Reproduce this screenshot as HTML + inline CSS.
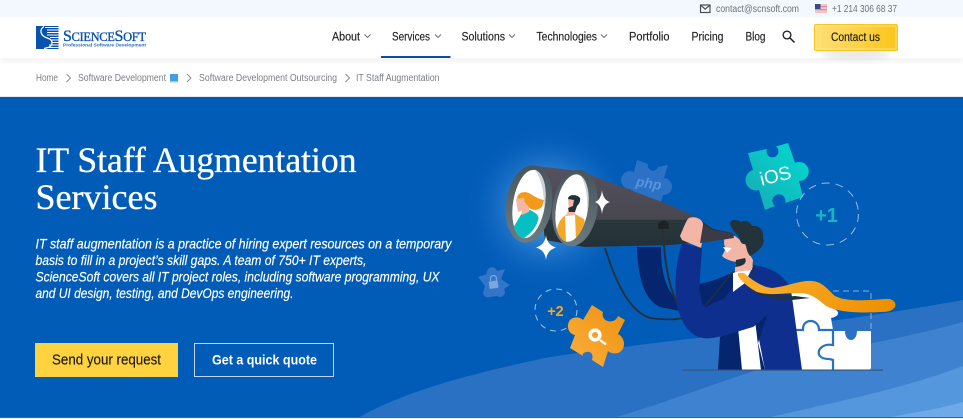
<!DOCTYPE html>
<html lang="en"><head><meta charset="utf-8"><title>IT Staff Augmentation Services</title>
<style>
html,body{margin:0;padding:0;background:#fff;width:963px;height:419px;overflow:hidden}
svg{display:block}
text{font-family:"Liberation Sans",Arial,sans-serif}
.n{font-size:11.5px;fill:#222;stroke:#222;stroke-width:.15px}
.b{font-size:10px;fill:#7b7f85}
.t{font-size:10px;fill:#6d7278}
.p{font-size:14px;font-style:italic;fill:#fff;stroke:#fff;stroke-width:.18px}
.h{font-family:"Liberation Serif",serif;font-size:36px;fill:#fff;stroke:#fff;stroke-width:.3px}
</style></head><body>
<svg width="963" height="419" viewBox="0 0 963 419" xmlns="http://www.w3.org/2000/svg">
<defs>
<linearGradient id="cb" x1="0" x2="1"><stop offset="0" stop-color="#ffdf75"/><stop offset="1" stop-color="#fac61c"/></linearGradient>
<linearGradient id="teal" x1="0" y1="1" x2="1" y2="0"><stop offset="0" stop-color="#17a9b4"/><stop offset="1" stop-color="#02dcd2"/></linearGradient>
<linearGradient id="or" x1="0" y1="1" x2="1" y2="0"><stop offset="0" stop-color="#fbb03f"/><stop offset="1" stop-color="#ed910f"/></linearGradient>
<linearGradient id="tie" x1="0" x2="1"><stop offset="0" stop-color="#fcb031"/><stop offset="1" stop-color="#ec8f00"/></linearGradient>
<linearGradient id="bino" x1="0" y1="0" x2="0" y2="1"><stop offset="0" stop-color="#55525f"/><stop offset=".66" stop-color="#48464f"/><stop offset=".67" stop-color="#2a383d"/><stop offset="1" stop-color="#233035"/></linearGradient>
<linearGradient id="rim" x1="0" y1="0" x2="0" y2="1"><stop offset="0" stop-color="#47555c"/><stop offset="1" stop-color="#6b7b80"/></linearGradient>
<radialGradient id="glow"><stop offset="0" stop-color="#9fd0ff" stop-opacity=".75"/><stop offset=".55" stop-color="#4f9be6" stop-opacity=".35"/><stop offset="1" stop-color="#0b5fb9" stop-opacity="0"/></radialGradient>
<filter id="sh" x="-30%" y="-30%" width="160%" height="200%"><feGaussianBlur stdDeviation="3"/></filter>
<clipPath id="l1"><ellipse cx="529" cy="204" rx="16" ry="34.500" transform="rotate(9 529 204)"/></clipPath>
<clipPath id="l2"><ellipse cx="572" cy="208" rx="16" ry="34" transform="rotate(9 572 208)"/></clipPath>
<clipPath id="hero"><rect x="0" y="97" width="963" height="320"/></clipPath>
</defs>

<!-- top bar -->
<rect width="963" height="17" fill="#f3f8fe"/>
<rect x="700.500" y="5" width="9.500" height="7.500" fill="none" stroke="#4a4f55" stroke-width="1.200"/>
<path d="M701 5.500l4.200 3.600 4.300-3.600" fill="none" stroke="#4a4f55" stroke-width="1.200"/>
<text class="t" x="716" y="12" textLength="83" lengthAdjust="spacingAndGlyphs">contact@scnsoft.com</text>
<rect x="815" y="4" width="12" height="9" fill="#f0c5c8"/>
<rect x="815" y="6" width="12" height="1.200" fill="#d98c96"/><rect x="815" y="9" width="12" height="1.200" fill="#d98c96"/>
<rect x="815" y="4" width="5.500" height="5" fill="#3b4a86"/>
<text class="t" x="832" y="12" textLength="65" lengthAdjust="spacingAndGlyphs">+1 214 306 68 37</text>

<!-- header -->
<rect x="0" y="57" width="963" height="4" fill="#000" opacity=".07" filter="url(#sh)"/>
<rect x="0" y="17" width="963" height="41" fill="#fff"/>
<!-- logo -->
<rect x="36" y="26" width="22.500" height="23" fill="#0a53ad"/>
<path d="M45 27.500h13.500M47 30h11.500M47 32.500h11.500M47 35h11.500M50 37.500h8.500M52 40h6.500M52 42.500h6.500M49 45h9.500M46 47.500h12.500" stroke="#fff" stroke-width="1.100"/>
<path d="M44 26.500c-5 3-3 8 0 10s8 2 8 6-3 5-8 6" fill="none" stroke="#fff" stroke-width="1.300"/>
<text x="63" y="41" textLength="83" lengthAdjust="spacing" style="font-family:'Liberation Serif',serif;font-size:16px;fill:#0b52aa;stroke:#0b52aa;stroke-width:.35px"><tspan>S</tspan><tspan font-size="12.500">CIENCE</tspan><tspan>S</tspan><tspan font-size="12.500">OFT</tspan></text>
<text x="63" y="46.700" textLength="83" lengthAdjust="spacingAndGlyphs" style="font-size:4.600px;font-weight:700;fill:#2f6dbb">Professional Software Development</text>
<!-- nav -->
<text class="n" x="332" y="40.500" textLength="28" lengthAdjust="spacingAndGlyphs">About</text>
<path d="M364.500 34.500l3 3 3-3" fill="none" stroke="#666" stroke-width=".9"/>
<text class="n" x="392" y="40.500" textLength="38" lengthAdjust="spacingAndGlyphs">Services</text>
<path d="M435 34.500l3 3 3-3" fill="none" stroke="#666" stroke-width=".9"/>
<rect x="381" y="56" width="69.500" height="2" fill="#0b4ea8"/>
<text class="n" x="461.500" y="40.500" textLength="43.500" lengthAdjust="spacingAndGlyphs">Solutions</text>
<path d="M509 34.500l3 3 3-3" fill="none" stroke="#666" stroke-width=".9"/>
<text class="n" x="536.500" y="40.500" textLength="60.500" lengthAdjust="spacingAndGlyphs">Technologies</text>
<path d="M601 34.500l3 3 3-3" fill="none" stroke="#666" stroke-width=".9"/>
<text class="n" x="629" y="40.500" textLength="40.500" lengthAdjust="spacingAndGlyphs">Portfolio</text>
<text class="n" x="691.500" y="40.500" textLength="32" lengthAdjust="spacingAndGlyphs">Pricing</text>
<text class="n" x="745.500" y="40.500" textLength="20" lengthAdjust="spacingAndGlyphs">Blog</text>
<circle cx="787" cy="35" r="3.900" fill="none" stroke="#1b1b1b" stroke-width="1.300"/>
<path d="M790 38l4.500 4.500" stroke="#1b1b1b" stroke-width="1.500"/>
<ellipse cx="856" cy="55" rx="34" ry="4" fill="#aaa" opacity=".3" filter="url(#sh)"/>
<rect x="814.500" y="24.500" width="83" height="26" rx="1.500" fill="url(#cb)" stroke="#fbc51d"/>
<rect x="816" y="26" width="80" height="23" fill="none" stroke="#ffe999" stroke-width=".8"/>
<text x="831" y="41" textLength="49" lengthAdjust="spacingAndGlyphs" style="font-size:11.500px;fill:#1a1a1a;stroke:#1a1a1a;stroke-width:.15px">Contact us</text>

<!-- breadcrumb -->
<text class="b" x="36" y="81" textLength="22" lengthAdjust="spacingAndGlyphs">Home</text>
<path d="M66.500 74l4 4-4 4M187 74l4 4-4 4M345.500 74l4 4-4 4" fill="none" stroke="#888" stroke-width=".9"/>
<text class="b" x="78" y="81" textLength="88" lengthAdjust="spacingAndGlyphs">Software Development</text>
<rect x="170" y="74" width="8" height="7" fill="#3f9fe0"/><rect x="170" y="81" width="8" height="1.500" fill="#b9c6d2"/>
<text class="b" x="199" y="81" textLength="138" lengthAdjust="spacingAndGlyphs">Software Development Outsourcing</text>
<text class="b" x="356" y="81" textLength="83.500" lengthAdjust="spacingAndGlyphs">IT Staff Augmentation</text>

<!-- hero -->
<rect x="0" y="96.500" width="963" height="1" fill="#c4cfdf"/>
<rect x="0" y="97" width="963" height="320" fill="#015cb8"/>
<g clip-path="url(#hero)">
<path d="M355 420C400 392 470 374 545 358C640 342 800 330 963 300V420Z" fill="#2a71c4"/>
<path d="M606 420C660 405 710 385 760 369C810 352 880 345 963 322V420Z" fill="#3f83d0"/>
<path d="M758 420C830 403 900 390 963 366V420Z" fill="#5597dc"/>
<path d="M875 420C905 414 935 410 963 402V420Z" fill="#6eaae7"/>
</g>
<rect x="0" y="417" width="963" height="1" fill="#1a6cc2"/>
<rect x="0" y="418" width="963" height="1" fill="#eaf1f9"/>

<!-- hero text -->
<text class="h" x="35.500" y="172" textLength="321" lengthAdjust="spacingAndGlyphs">IT Staff Augmentation</text>
<text class="h" x="35.500" y="209" textLength="122" lengthAdjust="spacingAndGlyphs">Services</text>
<text class="p" x="35.500" y="248.500" textLength="416" lengthAdjust="spacingAndGlyphs">IT staff augmentation is a practice of hiring expert resources on a temporary</text>
<text class="p" x="35.500" y="265" textLength="331" lengthAdjust="spacingAndGlyphs">basis to fill in a project’s skill gaps. A team of 750+ IT experts,</text>
<text class="p" x="35.500" y="281.500" textLength="404" lengthAdjust="spacingAndGlyphs">ScienceSoft covers all IT project roles, including software programming, UX</text>
<text class="p" x="35.500" y="298" textLength="258" lengthAdjust="spacingAndGlyphs">and UI design, testing, and DevOps engineering.</text>
<rect x="35" y="343" width="143" height="34" fill="#ffd23f"/>
<text x="52" y="364.500" textLength="109" lengthAdjust="spacingAndGlyphs" style="font-size:14.500px;fill:#1a1a1a;stroke:#1a1a1a;stroke-width:.15px">Send your request</text>
<rect x="194.500" y="343.500" width="139" height="33" fill="none" stroke="#c3d5ee"/>
<text x="212" y="364.500" textLength="105" lengthAdjust="spacingAndGlyphs" style="font-size:14px;font-weight:700;fill:#fff">Get a quick quote</text>

<!-- illustration -->
<circle cx="548" cy="208" r="82" fill="url(#glow)"/>
<!-- php puzzle -->
<path d="M637 160L648 164A5 5 0 0 0 658 167L668 165L664 178A8.500 8.500 0 1 1 663 195L660 205L630 195L631 189A9 9 0 1 1 634 172Z" fill="#2b72c6"/>
<text x="648" y="188" transform="rotate(9 648 188)" text-anchor="middle" style="font-size:14px;font-style:italic;font-weight:700;fill:#5b95db">php</text>
<!-- lock puzzle -->
<path d="M478 277L487 274A5 5 0 1 1 497 271L505 269L501 279L510 285L504 289A5 5 0 0 1 497 296L490 297A5 5 0 0 1 483 293L485 286Z" fill="#3375c9"/>
<rect x="489" y="281" width="9" height="7.500" rx="1" fill="#7ba6de" transform="rotate(-8 493 284)"/>
<path d="M490.500 281v-2.500a3 3 0 0 1 6 0v2" fill="none" stroke="#7ba6de" stroke-width="1.300"/>
<!-- +2 -->
<circle cx="556" cy="310" r="21" fill="none" stroke="#a8c3e4" stroke-width="1" stroke-dasharray="6 5"/>
<text x="555.500" y="316" text-anchor="middle" style="font-size:14.500px;font-weight:700;fill:#f6a623">+2</text>
<!-- orange puzzle -->
<path d="M592 305L603 312C600 322 615 325 618 316L625 320L618 334C626 338 626 350 618 353C614 354 610 353 608 351L603 367L592 360C594 354 590 351 587 352C584 352 582 354 583 356L570 348L575 335C568 334 566 325 570 320C574 316 580 317 583 320Z" fill="url(#or)"/>
<circle cx="595" cy="335" r="4.800" fill="none" stroke="#fff" stroke-width="3.600"/>
<path d="M600 340l6 4.500" stroke="#fff" stroke-width="2.200"/>
<!-- straps back -->
<path d="M605 248C618 290 632 312 650 318C665 320 680 320 690 316" fill="none" stroke="#27303a" stroke-width="1.800"/>
<!-- back arm -->
<path d="M637 247L661 247C661 275 666 290 680 303L680 311L660 307C645 300 638 280 637 247Z" fill="#05266e"/>
<!-- binoculars -->
<path d="M536 166L580 171L670 205L690 214C700 218 708 226 713 229L733 233L733 238L700 242L670 245L585 247L545 240Z" fill="url(#bino)"/>
<ellipse cx="529" cy="204" rx="23" ry="39" transform="rotate(8 529 204)" fill="url(#rim)"/>
<ellipse cx="575" cy="208" rx="22.500" ry="38.500" transform="rotate(8 575 208)" fill="url(#rim)"/>
<ellipse cx="529" cy="204" rx="16" ry="34.500" transform="rotate(9 529 204)" fill="#fff"/>
<ellipse cx="572" cy="208" rx="16" ry="34" transform="rotate(9 572 208)" fill="#fff"/>
<g clip-path="url(#l1)">
<path d="M535 170C546 185 547 215 537 240L560 240L550 165Z" fill="#cfd3d6"/>
<path d="M513 228L522 213L530 210C536 213 540 216 538 220C537 226 530 236 520 240L505 245Z" fill="#05bfc3"/>
<path d="M521 204L529 203L529 212L522 215Z" fill="#f4b7a4"/>
<path d="M517 198C518 192 524 191 529 193C534 196 538 199 544 200L542 207C537 211 531 211 528 206C525 203 523 200 519 201Z" fill="#f39a1d"/>
<path d="M516 199L524 198L525 209L518 212L517 206Z" fill="#f4b7a4"/>
</g>
<g clip-path="url(#l2)">
<path d="M578 172C590 185 590 220 580 245L600 245L595 165Z" fill="#cfd3d6"/>
<path d="M557 230C558 222 562 217 566 215L575 214L584 219C586 224 583 233 577 244L560 242Z" fill="#f4a82a"/>
<path d="M565 216L575 214L576 241L566 243Z" fill="#fff"/>
<path d="M569 208L575 207L575 215L566 216Z" fill="#f4b7a4"/>
<path d="M568 199L576 199L576 208L569 211Z" fill="#f4b7a4"/>
<path d="M568 199C568 194 577 194 580 198C581 202 578 205 577 206L575 212L569 212L568 208L573 206L574 200Z" fill="#22303a"/>
</g>
<!-- sparkles -->
<path d="M602 190Q603 200 610 202Q603 204 602 214Q601 204 595 202Q601 200 602 190Z" fill="#fff"/>
<path d="M546 235Q547 245 556 247.500Q547 250 546 260Q545 250 536 247.500Q545 245 546 235Z" fill="#fff"/>
<!-- strap front -->
<path d="M663 226C664 260 668 285 678 305" fill="none" stroke="#27303a" stroke-width="2"/>
<path d="M658 223L664 220L669 223L669 229L658 229Z" fill="#1c2428"/>
<!-- hand -->
<path d="M680 236C682 232 686 220 689 218C694 216 702 218 703 224C704 232 702 242 701 248L682 240Z" fill="#f3b5a6"/>
<!-- white puzzle -->
<path d="M785 292L831 292L831 308C840 310 841 316 831 318L833 330L785 330Z" fill="#fff"/>
<path d="M785 330H833V370H785Z" fill="#fff"/>
<path d="M833 331H845C845 343 857 343 857 331H871V367Q871 370 868 370H833Z" fill="#fff"/>
<path d="M795 330H803C802 318 819 318 819 330H833V345C821 343 816 352 820 356C823 360 828 358 833 360V370" fill="none" stroke="#2a70c8" stroke-width="2.200"/>
<path d="M833 291H871V330" fill="none" stroke="#8fb0da" stroke-width="1" stroke-dasharray="6 4"/>
<!-- body -->
<path d="M698 284C712 282 726 276 733 272L755 265C770 268 785 274 791 290L802 370L718 370L722 335L700 310Z" fill="#0f2f8f"/>
<path d="M698 284C712 282 726 276 733 272L745 270L725 298L703 308Z" fill="#05266e"/>
<path d="M720 337L738 328L742 370L718 370Z" fill="#05266e"/>
<path d="M738 327L755 319L765 370L742 370Z" fill="#fff"/>
<path d="M755 320L770 307L758 343L765 370L761 370Z" fill="#05266e"/>
<path d="M733 273L753 266L745 283L733 292Z" fill="#fff"/>
<path d="M733 272L704 307" stroke="#27303a" stroke-width="1.300"/>
<path d="M755 265L752 277" stroke="#27303a" stroke-width="1.300"/>
<!-- neck & head -->
<path d="M725 236L735 236L748 246L750 255L753 260L752 270L735 272L735 264L737 262C730 261 725 259 722 256L726 248C723 245 724 240 725 236Z" fill="#f3b5a6"/>
<path d="M736 260L745 258C747 262 745 266 735 267Z" fill="#22333b"/>
<path d="M723 247L732 248L727 253Z" fill="#fff"/>
<path d="M730 224C731 218 738 220 741 222C746 219 750 222 752 226C759 225 764 230 763 237C765 243 762 250 750 256C746 251 747 247 745 244C741 245 740 240 738 236C736 233 732 230 730 224Z" fill="#22333b"/>
<!-- eyepiece tip over face -->
<path d="M703 225L713 230L733 233L734 238L700 243Z" fill="#3c3b45"/>
<!-- front arm -->
<path d="M682 243L702 248L699 293C701 303 704 308 708 307C728 304 750 296 771 306C770 314 760 322 753 327C735 332 715 340 703 338C690 336 682 325 677 305C674 290 675 265 682 243Z" fill="#0f2f8f"/>
<!-- tie -->
<path d="M746 278C760 292 775 298 795 296L810 298L792 300C775 300 755 296 746 285Z" fill="#22333b"/>
<path d="M738 273L744 273C752 280 762 287 772 288C785 287 800 280 812 281C823 282 827 289 835 296C845 301 860 301 885 299C892 298 897 302 895 307C892 311 888 312 880 312C862 313 840 313 826 306C818 299 810 293 800 293C785 293 770 296 757 292C749 288 742 282 738 276Z" fill="url(#tie)"/>
<rect x="683" y="369.500" width="200" height="1.200" fill="#33577f"/>
<!-- iOS puzzle -->
<path d="M748 153L767 149A6 6 0 1 0 776 146.500L788 143L795 163A9.500 9.500 0 1 1 799 181L803 197L785 203A6.500 6.500 0 1 0 775 206L765 210L759 190A9.500 9.500 0 1 1 753 170Z" fill="url(#teal)"/>
<text x="777" y="182" transform="rotate(-14 777 182)" text-anchor="middle" style="font-size:19px;fill:#fff">iOS</text>
<!-- +1 -->
<circle cx="827.500" cy="214" r="31" fill="none" stroke="#9dbbdf" stroke-width="1" stroke-dasharray="8 6"/>
<text x="826.500" y="222" text-anchor="middle" style="font-size:20px;font-weight:700;fill:#14b7bf">+1</text>
</svg>
</body></html>
